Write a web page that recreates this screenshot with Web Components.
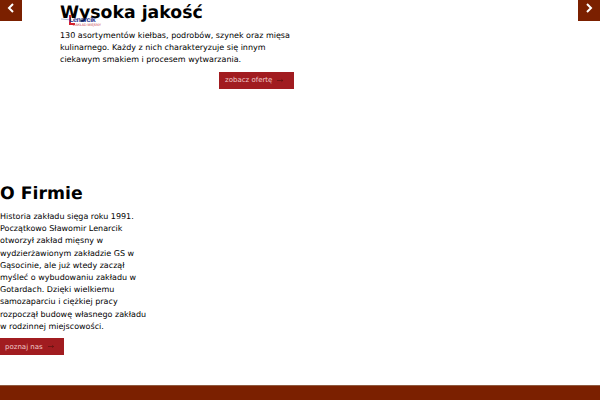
<!DOCTYPE html>
<html lang="pl">
<head>
<meta charset="utf-8">
<title>Lenarcik</title>
<style>
html, body { margin: 0; height: 100%; }
body { font-family: "DejaVu Sans", sans-serif; color: #000; background: #fff; overflow: hidden; text-rendering: geometricPrecision; }
</style>
</head>
<body>
<page-shell>
  <slide-arrow dir="prev"></slide-arrow>
  <slide-arrow dir="next"></slide-arrow>
  <info-block class="first" heading="Wysoka jakość" cta="zobacz ofertę" side="end">
    130 asortymentów kiełbas, podrobów, szynek oraz mięsa kulinarnego. Każdy z nich charakteryzuje się innym ciekawym smakiem i procesem wytwarzania.
  </info-block>
  <site-logo></site-logo>
  <info-block class="second" heading="O Firmie" cta="poznaj nas" side="start">
    Historia zakładu sięga roku 1991.<br>Początkowo Sławomir Lenarcik<br>otworzył zakład mięsny w<br>wydzierżawionym zakładzie GS w<br>Gąsocinie, ale już wtedy zaczął<br>myśleć o wybudowaniu zakładu w<br>Gotardach. Dzięki wielkiemu<br>samozaparciu i ciężkiej pracy<br>rozpoczął budowę własnego zakładu<br>w rodzinnej miejscowości.
  </info-block>
  <site-footer></site-footer>
</page-shell>
<script>
class PageShell extends HTMLElement {
  constructor() {
    super();
    this.attachShadow({ mode: 'open' }).innerHTML = `
<style>
:host { display: flex; flex-direction: column; height: 400px; width: 600px; position: relative; overflow: hidden; }
</style>
<slot></slot>`;
  }
}

class SlideArrow extends HTMLElement {
  constructor() {
    super();
    const next = this.getAttribute('dir') == 'next';
    this.attachShadow({ mode: 'open' }).innerHTML = `
<style>
:host { position: absolute; top: 0; ${next ? 'right' : 'left'}: 0; width: 22px; height: 21px; background: #7b2000; display: flex; align-items: center; justify-content: center; }
svg { display: block; margin-top: -5px; }
</style>
<svg width="8" height="10" viewBox="0 0 8 10"><path d="${next ? 'M2 1l4 4-4 4' : 'M6 1L2 5l4 4'}" fill="none" stroke="#fff" stroke-width="2"/></svg>`;
  }
}

class SiteLogo extends HTMLElement {
  constructor() {
    super();
    this.attachShadow({ mode: 'open' }).innerHTML = `
<style>
:host { position: absolute; left: 60px; top: 13px; width: 46px; height: 14px; display: block; }
svg { position: absolute; left: 0; top: 0; }
.name { position: absolute; left: 9px; top: 4px; font: bold 7px/7px "Liberation Sans", sans-serif; color: #1c2f8a; letter-spacing: -0.3px; }
.sub { position: absolute; left: 13px; top: 10px; font: 3.5px/4px "Liberation Sans", sans-serif; color: #c8404a; white-space: nowrap; }
</style>
<svg width="46" height="14" viewBox="0 0 46 14"><path d="M1 6l11 1" stroke="#b9bfd8" stroke-width="1"/><path d="M10 2v9h5" fill="none" stroke="#d5202a" stroke-width="2"/></svg>
<span class="name">Lenarcik</span><span class="sub">ZAKŁAD MIĘSNY</span>`;
  }
}

class InfoBlock extends HTMLElement {
  constructor() {
    super();
    const start = this.getAttribute('side') == 'start';
    this.attachShadow({ mode: 'open' }).innerHTML = `
<style>
:host { display: flex; flex-direction: column; flex: none; }
:host(.first) { padding: 1px 0 0 60px; width: 234px; height: 183px; }
:host(.second) { width: 150px; height: 201px; margin-top: -2px; }
h2 { margin: 0; font: bold 17.3px/24px "DejaVu Sans", sans-serif; color: #000; }
p { margin: 5px 0 0; font-size: 8px; line-height: 12.2px; color: #000; white-space: ${start ? 'nowrap' : 'normal'}; }
a { align-self: ${start ? 'flex-start' : 'flex-end'}; margin-top: 5px; height: 17px; box-sizing: border-box; background: #a11c20; color: #f0c9c9; font-size: 7px; white-space: nowrap; display: flex; align-items: center; gap: 5px; padding: 0 10px 0 ${start ? '5px' : '6px'}; text-decoration: none; }
svg { display: block; }
:host(.first) a { width: 75px; }
:host(.second) a { width: 64px; }
</style>
<h2>${this.getAttribute('heading')}</h2>
<p><slot></slot></p>
<a href="#">${this.getAttribute('cta')}<svg width="9" height="5" viewBox="0 0 9 5"><path d="M0 2.5h8M6 .8l2 1.7-2 1.7" fill="none" stroke="#5c1210" stroke-width="1"/></svg></a>`;
  }
}

class SiteFooter extends HTMLElement {
  constructor() {
    super();
    this.attachShadow({ mode: 'open' }).innerHTML = `
<style>
:host { display: block; flex: none; height: 15px; margin-top: 2px; background: #7b2000; box-shadow: inset 0 1px 0 #8f5a40; }
</style>`;
  }
}

customElements.define('page-shell', PageShell);
customElements.define('slide-arrow', SlideArrow);
customElements.define('site-logo', SiteLogo);
customElements.define('info-block', InfoBlock);
customElements.define('site-footer', SiteFooter);
</script>
</body>
</html>
